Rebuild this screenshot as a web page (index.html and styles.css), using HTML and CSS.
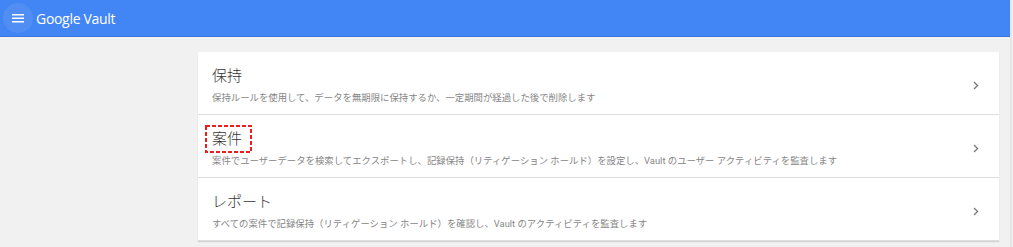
FILE: index.html
```html
<!DOCTYPE html>
<html lang="ja">
<head>
    <meta charset="UTF-8">
    <meta name="viewport" content="width=device-width, initial-scale=1.0">
    <title>Google Vault</title>
    <link rel="stylesheet" href="styles.css">
</head>
<body>
    <header class="app-bar">
        <button class="menu-btn" aria-label="メニュー">
            <svg width="12" height="9" viewBox="0 0 12 9">
                <rect x="0" y="0" width="12" height="1.5" fill="#fff"/>
                <rect x="0" y="3.5" width="12" height="1.5" fill="#fff"/>
                <rect x="0" y="7" width="12" height="1.5" fill="#fff"/>
            </svg>
        </button>
        <span class="app-title">Google Vault</span>
    </header>

    <main class="content">
        <div class="card-list">
            <a class="card" href="#">
                <div class="card-text">
                    <div class="card-title">保持</div>
                    <div class="card-desc">保持ルールを使用して、データを無期限に保持するか、一定期間が経過した後で削除します</div>
                </div>
                <svg class="chevron" width="6" height="9" viewBox="0 0 6 9">
                    <polyline points="1,1 4.5,4.5 1,8" fill="none" stroke="#777" stroke-width="1.3"/>
                </svg>
            </a>
            <a class="card" href="#">
                <div class="card-text">
                    <div class="card-title"><span class="marked">案件<svg class="mark" width="47" height="28" viewBox="0 0 47 28"><rect x="1" y="1" width="45" height="26" fill="none" stroke="#ee1c1c" stroke-width="2" stroke-dasharray="4 2"/></svg></span></div>
                    <div class="card-desc">案件でユーザーデータを検索してエクスポートし、記録保持（リティゲーション ホールド）を設定し、Vault のユーザー アクティビティを監査します</div>
                </div>
                <svg class="chevron" width="6" height="9" viewBox="0 0 6 9">
                    <polyline points="1,1 4.5,4.5 1,8" fill="none" stroke="#777" stroke-width="1.3"/>
                </svg>
            </a>
            <a class="card" href="#">
                <div class="card-text">
                    <div class="card-title">レポート</div>
                    <div class="card-desc">すべての案件で記録保持（リティゲーション ホールド）を確認し、Vault のアクティビティを監査します</div>
                </div>
                <svg class="chevron" width="6" height="9" viewBox="0 0 6 9">
                    <polyline points="1,1 4.5,4.5 1,8" fill="none" stroke="#777" stroke-width="1.3"/>
                </svg>
            </a>
        </div>
    </main>
</body>
</html>
```

FILE: styles.css
```css
* {
    margin: 0;
    padding: 0;
    box-sizing: border-box;
}

body {
    background-color: #f1f1f1;
    font-family: Roboto, "Noto Sans CJK JP", sans-serif;
    height: 100vh;
    border-right: 2px solid #e6e6e6;
    margin-right: 1px;
}

.app-bar {
    height: 37px;
    background-color: #4285f4;
    border-bottom: 1px solid #3a76dc;
    display: flex;
    align-items: center;
    padding-left: 3px;
}

.menu-btn {
    width: 30px;
    height: 30px;
    border: none;
    border-radius: 50%;
    background-color: rgba(255, 255, 255, 0.08);
    display: flex;
    align-items: center;
    justify-content: center;
    cursor: pointer;
}

.app-title {
    color: white;
    font-family: "Open Sans", sans-serif;
    font-size: 14px;
    margin-left: 3px;
    letter-spacing: -0.3px;
}

.content {
    padding: 15px 11px 0 198px;
}

.card-list {
    background-color: white;
    box-shadow: 0 1px 1px rgba(0, 0, 0, 0.12);
}

.card {
    display: flex;
    align-items: center;
    height: 63px;
    padding: 4px 20px 0 14px;
    border-bottom: 1px solid #dedede;
    color: inherit;
    text-decoration: none;
}

.card-text {
    flex: 1;
}

.card-title {
    font-size: 15px;
    font-weight: 300;
    line-height: 20px;
    color: #333;
    margin-bottom: 5px;
}

.card-desc {
    font-size: 9.4px;
    line-height: 14px;
    color: #868686;
}

.marked {
    position: relative;
    display: inline-block;
}

.mark {
    position: absolute;
    left: -7px;
    top: -4px;
}

.chevron {
    display: block;
}
```
